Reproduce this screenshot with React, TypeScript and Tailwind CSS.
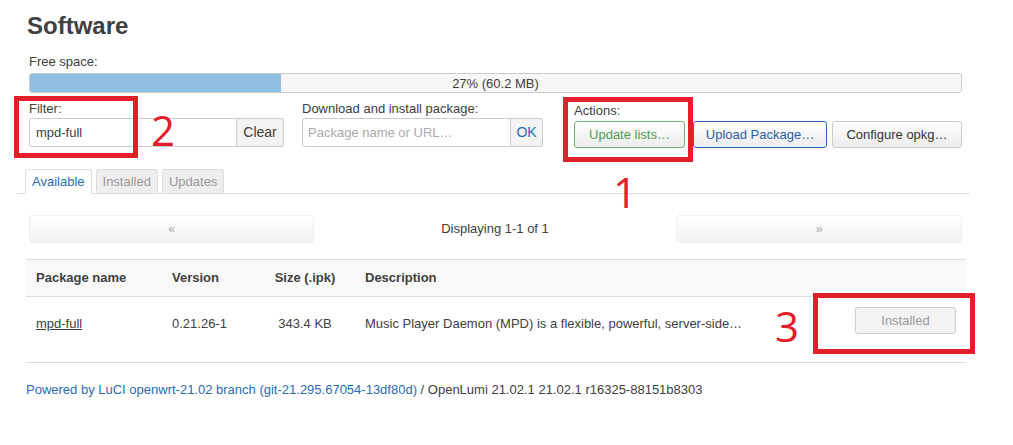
import React from "react";

const btn =
  "h-[27px] rounded-[3px] border bg-linear-to-b from-white to-[#ececec] text-[13px] flex items-center justify-center";

const Tab = ({ label, active }: { label: string; active?: boolean }) => (
  <div
    className={
      active
        ? "h-[25px] -mb-px px-[6px] flex items-center rounded-t-[3px] border border-b-0 border-[#ddd] bg-white text-[#2a6bb5]"
        : "h-[24px] px-[6px] flex items-center rounded-t-[3px] border border-b-0 border-[#ddd] bg-[#eee] text-[#999]"
    }
  >
    {label}
  </div>
);

const Num = ({ n, cls }: { n: string; cls: string }) => (
  <div className={"absolute text-[42px] leading-none text-[#e3202a] font-['Open_Sans',sans-serif] " + cls}>{n}</div>
);

export default function App() {
  return (
    <div className="relative w-[1013px] h-[445px] overflow-hidden bg-white text-[13px] text-[#404040] font-['Liberation_Sans',Arial,sans-serif]">
      <div className="pl-[29px] pt-[12px] w-[962px]">
        <h2 className="-ml-[2px] text-[24px] font-bold leading-[28px]">Software</h2>

        <div className="mt-[14px] leading-[16px]">Free space:</div>
        <div className="relative mt-[3px] h-[20px] rounded-[3px] border border-[#ccc] bg-[#f7f7f7] overflow-hidden">
          <div className="h-full w-[27%] bg-[#8fbfe0]" />
          <div className="absolute inset-0 flex items-center justify-center leading-none">27% (60.2 MB)</div>
        </div>

        {/* filter / download / actions */}
        <div className="mt-[8px] flex items-start">
          <div>
            <div className="leading-[16px]">Filter:</div>
            <div className="mt-[1px] flex h-[29px]">
              <div className="w-[208px] flex items-center pl-[6px] border border-[#ccc] rounded-l-[3px]">mpd-full</div>
              <div className="w-[47px] flex items-center justify-center border border-l-0 border-[#ccc] rounded-r-[3px] bg-[#f3f3f3] text-[14px]">
                Clear
              </div>
            </div>
          </div>
          <div className="ml-[18px]">
            <div className="leading-[16px]">Download and install package:</div>
            <div className="mt-[1px] flex h-[29px]">
              <div className="w-[209px] flex items-center pl-[5px] border border-[#ccc] rounded-l-[3px] text-[#aaa]">
                Package name or URL…
              </div>
              <div className="w-[32px] flex items-center justify-center border border-l-0 border-[#ccc] rounded-r-[3px] bg-[#f3f3f3] text-[14px] text-[#2a6bb5]">
                OK
              </div>
            </div>
          </div>
          <div className="ml-[31px] mt-[2px]">
            <div className="leading-[16px]">Actions:</div>
            <div className="mt-[2px] flex">
              <div className={btn + " w-[111px] border-[#6cb86c] text-[#4f9d4f]"}>Update lists…</div>
              <div className={btn + " ml-[8px] w-[134px] border-[#2a6bb5] text-[#2a5ea8]"}>Upload Package…</div>
              <div className={btn + " ml-[5px] w-[130px] border-[#ccc] text-[#333]"}>Configure opkg…</div>
            </div>
          </div>
        </div>

        {/* tabs */}
        <div className="mt-[21px] -ml-[12px] w-[953px] pl-[8px] flex items-end gap-[4px] border-b border-[#ddd]">
          <Tab label="Available" active />
          <Tab label="Installed" />
          <Tab label="Updates" />
        </div>

        {/* pager */}
        <div className="mt-[21px] flex items-center h-[28px]">
          <div className="w-[285px] h-full flex items-center justify-center rounded-[3px] border border-[#f0f0f0] bg-linear-to-b from-white to-[#f1f1f1] text-[#aaa]">
            «
          </div>
          <div className="flex-1 text-center">Displaying 1-1 of 1</div>
          <div className="w-[286px] h-full flex items-center justify-center rounded-[3px] border border-[#f0f0f0] bg-linear-to-b from-white to-[#f1f1f1] text-[#aaa]">
            »
          </div>
        </div>

        {/* table */}
        <table className="mt-[16px] -ml-[3px] w-[940px] table-fixed border-collapse">
          <colgroup>
            <col className="w-[136px]" />
            <col className="w-[93px]" />
            <col className="w-[100px]" />
            <col className="w-[400px]" />
            <col />
          </colgroup>
          <thead>
            <tr className="h-[37px] bg-[#f9f9f9] border-y border-[#ddd] font-bold">
              <td className="pl-[10px]">Package name</td>
              <td className="pl-[10px]">Version</td>
              <td className="text-center">Size (.ipk)</td>
              <td className="pl-[10px]">Description</td>
              <td />
            </tr>
          </thead>
          <tbody>
            <tr className="h-[66px] border-b border-[#ddd] align-top">
              <td className="pl-[10px] pt-[17px]">
                <span className="underline">mpd-full</span>
              </td>
              <td className="pl-[10px] pt-[17px]">0.21.26-1</td>
              <td className="text-center pt-[17px]">343.4 KB</td>
              <td className="pl-[10px] pt-[17px] whitespace-nowrap">
                Music Player Daemon (MPD) is a flexible, powerful, server-side…
              </td>
              <td className="pt-[10px] pr-[10px]">
                <div className="ml-auto w-[101px] h-[27px] flex items-center justify-center rounded-[3px] border border-[#ccc] bg-[#f3f3f3] text-[#999]">
                  Installed
                </div>
              </td>
            </tr>
          </tbody>
        </table>

        <div className="mt-[19px] -ml-[3px] leading-[16px] whitespace-nowrap">
          <span className="text-[#2a6bb5]">Powered by LuCI openwrt-21.02 branch (git-21.295.67054-13df80d)</span> / OpenLumi
          21.02.1 21.02.1 r16325-88151b8303
        </div>
      </div>

      {/* annotations */}
      <div className="absolute left-[14px] top-[96px] w-[124px] h-[62px] border-[5px] border-[#e3202a]" />
      <div className="absolute left-[563px] top-[97px] w-[130px] h-[65px] border-[5px] border-[#e3202a]" />
      <div className="absolute left-[813px] top-[293px] w-[162px] h-[61px] border-[5px] border-[#e3202a]" />
      <Num n="2" cls="left-[151px] top-[109px]" />
      <Num n="1" cls="left-[613px] top-[171px]" />
      <Num n="3" cls="left-[775px] top-[305px]" />
    </div>
  );
}
